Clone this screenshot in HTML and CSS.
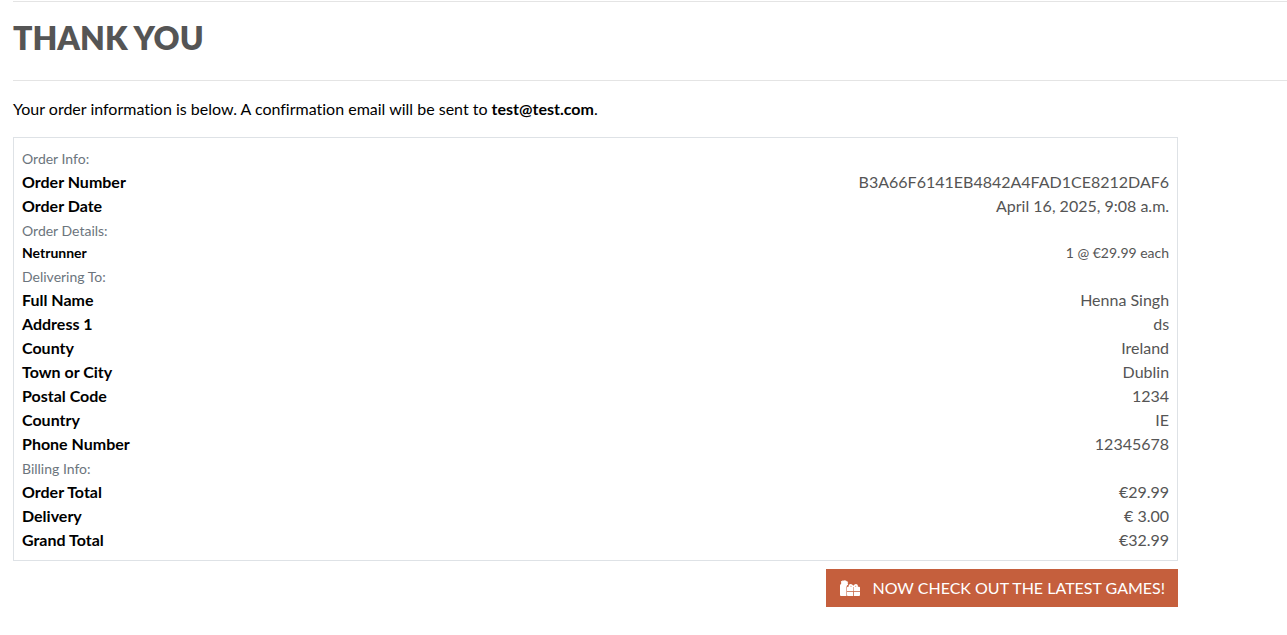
FILE: index.html
```html
<!DOCTYPE html>
<html lang="en">
<head>
<meta charset="utf-8">
<meta name="viewport" content="width=device-width, initial-scale=1">
<title>Thank You</title>
<link rel="stylesheet" href="styles.css">
</head>
<body>
<main class="page">
  <header class="page-header">
    <h1 class="page-title">Thank You</h1>
  </header>
  <p class="intro">Your order information is below. A confirmation email will be sent to <strong>test@test.com</strong>.</p>
  <div class="content-row">
    <div class="content">
      <section class="order">
        <h2 class="section-label">Order Info:</h2>
        <dl class="rows">
          <div class="row"><dt>Order Number</dt><dd>B3A66F6141EB4842A4FAD1CE8212DAF6</dd></div>
          <div class="row"><dt>Order Date</dt><dd>April 16, 2025, 9:08 a.m.</dd></div>
        </dl>
        <h2 class="section-label">Order Details:</h2>
        <dl class="rows">
          <div class="row row-small"><dt>Netrunner</dt><dd>1 @ €29.99 each</dd></div>
        </dl>
        <h2 class="section-label">Delivering To:</h2>
        <dl class="rows">
          <div class="row"><dt>Full Name</dt><dd>Henna Singh</dd></div>
          <div class="row"><dt>Address 1</dt><dd>ds</dd></div>
          <div class="row"><dt>County</dt><dd>Ireland</dd></div>
          <div class="row"><dt>Town or City</dt><dd>Dublin</dd></div>
          <div class="row"><dt>Postal Code</dt><dd>1234</dd></div>
          <div class="row"><dt>Country</dt><dd>IE</dd></div>
          <div class="row"><dt>Phone Number</dt><dd>12345678</dd></div>
        </dl>
        <h2 class="section-label">Billing Info:</h2>
        <dl class="rows">
          <div class="row"><dt>Order Total</dt><dd>€29.99</dd></div>
          <div class="row"><dt>Delivery</dt><dd>€ 3.00</dd></div>
          <div class="row"><dt>Grand Total</dt><dd>€32.99</dd></div>
        </dl>
      </section>
      <div class="actions">
        <a class="button" href="#">
          <svg class="button-icon" viewBox="0 0 640 512" aria-hidden="true">
            <path fill="currentColor" d="M0 176Q0 135 36 128V64Q20 48 36 32L72 36 78 4 112 20 134 0 158 20 192 4 204 36 240 32 236 64 264 84 244 112 264 140Q210 160 206 224V512H32Q0 512 0 480Z"/>
            <path fill="currentColor" fill-rule="evenodd" d="M222 358V248Q222 216 254 216H276V184Q280 128 340 128 392 128 428 182 460 128 510 128 568 128 572 184V216H608Q640 216 640 248V358H440V224H424V358ZM334 188V210H376Q366 184 346 182 336 182 334 188ZM472 210H518V190Q516 182 508 182 484 184 472 210Z"/>
            <path fill="currentColor" d="M222 384H420V512H254Q222 512 222 480ZM444 384H640V480Q640 512 608 512H444Z"/>
          </svg>
          <span>Now check out the latest games!</span>
        </a>
      </div>
    </div>
  </div>
</main>
</body>
</html>
```
FILE: styles.css
```css
* {
  box-sizing: border-box;
}

body {
  margin: 0;
  background: #fff;
  color: #000;
  font: 16px/24px Lato, "Liberation Sans", sans-serif;
  font-variant-ligatures: none;
}

.page {
  padding: 1px 0 24px 13px;
}

.page-header {
  padding: 16px 0 22px;
  border-top: 1px solid #e4e4e4;
  border-bottom: 1px solid #e4e4e4;
}

.page-title {
  margin: 0;
  color: #555;
  font-size: 32px;
  font-weight: 800;
  line-height: 40px;
  text-transform: uppercase;
}

.intro {
  margin: 16px 0;
}

.content-row {
  display: grid;
  grid-template-columns: 11fr 1fr;
  padding-right: 3px;
}

.order {
  padding: 8px;
  border: 1px solid #dee2e6;
}

.section-label {
  margin: 0;
  padding-top: 1px;
  color: #6c757d;
  font-size: 14px;
  font-weight: 400;
  line-height: 23px;
}

.rows {
  margin: 0;
}

.row {
  display: flex;
  justify-content: space-between;
  gap: 16px;
}

.row-small {
  font-size: 14px;
  line-height: 22px;
}

dt {
  font-weight: 700;
}

dd {
  margin: 0;
  color: #555;
  text-align: right;
  overflow-wrap: anywhere;
}

.actions {
  display: flex;
  justify-content: flex-end;
  margin-top: 8px;
}

.button {
  display: flex;
  align-items: center;
  gap: 12px;
  padding: 7px 13px 7px 14px;
  background: #c55f3d;
  color: #fff;
  text-decoration: none;
  text-transform: uppercase;
}

.button-icon {
  width: 20px;
  height: 16px;
}
```
